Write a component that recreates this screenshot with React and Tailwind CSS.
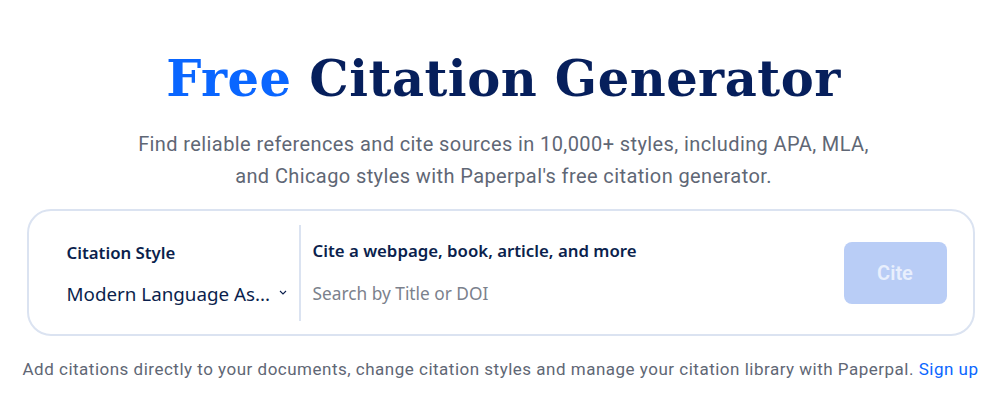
import React from "react";

export default function App() {
  return (
    <div className="w-[1007px] h-[414px] bg-white overflow-hidden flex flex-col items-center">
      <h1 className="mt-[50px] text-[49.5px] leading-[58px] font-bold text-[#061f5c] tracking-[0.5px]" style={{ fontFamily: '"DejaVu Serif", "Liberation Serif", serif' }}>
        <span className="text-[#0a66ff]">Free</span> Citation Generator
      </h1>
      <p className="mt-[20px] text-center text-[20px] leading-[32px] tracking-[0.4px] text-[#5f6775]" style={{ fontFamily: 'Roboto, "Noto Sans", sans-serif' }}>
        Find reliable references and cite sources in 10,000+ styles, including APA, MLA,
        <br />
        and Chicago styles with Paperpal's free citation generator.
      </p>
      <div className="mt-[17px] w-[948px] h-[127px] ml-[-6px] border-2 border-[#dbe3f1] rounded-[24px] flex items-center pl-[38px] pr-[26px]" style={{ fontFamily: '"Noto Sans", "Open Sans", sans-serif' }}>
        <div className="w-[232px] flex flex-col">
          <div className="text-[16.8px] font-semibold text-[#0b1f4d] leading-[22px] mt-[3px]">Citation Style</div>
          <div className="mt-[18px] flex items-center justify-between pr-[12px]">
            <span className="text-[18.8px] text-[#0b1f4d] leading-[24px]">Modern Language As...</span>
            <svg width="8" height="5" viewBox="0 0 8 5" className="mt-[-4px]">
              <path d="M1 1l3 3 3-3" stroke="#0b1f4d" strokeWidth="1.1" fill="none" />
            </svg>
          </div>
        </div>
        <div className="w-[2px] h-[96px] bg-[#dbe3f1]" />
        <div className="flex-1 flex flex-col pl-[12px]">
          <div className="text-[16.8px] font-semibold text-[#0b1f4d] leading-[22px]">Cite a webpage, book, article, and more</div>
          <div className="mt-[20px] text-[17.3px] text-[#7b818c] leading-[24px]">Search by Title or DOI</div>
        </div>
        <button className="w-[103px] h-[62px] rounded-[8px] bg-[#b9cdf6] text-[#e8effd] text-[20px] font-semibold" style={{ fontFamily: 'Roboto, sans-serif' }}>
          Cite
        </button>
      </div>
      <p className="mt-[21px] ml-[-6px] text-[17px] leading-[24px] tracking-[0.5px] text-[#5f6775] whitespace-nowrap" style={{ fontFamily: 'Roboto, "Noto Sans", sans-serif' }}>
        Add citations directly to your documents, change citation styles and manage your citation library with Paperpal. <span className="text-[#0a66ff]">Sign up</span>
      </p>
    </div>
  );
}
